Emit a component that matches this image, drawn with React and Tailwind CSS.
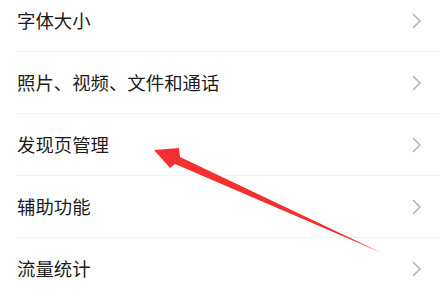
import React from "react";

const items = ["字体大小", "照片、视频、文件和通话", "发现页管理", "辅助功能", "流量统计"];

function Chevron() {
  return (
    <svg width="10" height="16" viewBox="0 0 10 16" className="shrink-0">
      <path d="M1.5 1.5 L8 8 L1.5 14.5" fill="none" stroke="#b5b5b5" strokeWidth="1.6" strokeLinecap="round" strokeLinejoin="round" />
    </svg>
  );
}

export default function App() {
  return (
    <div
      className="relative w-[440px] h-[298px] overflow-hidden bg-white"
      style={{ fontFamily: '"Noto Sans CJK SC", "Noto Sans", sans-serif' }}
    >
      <div className="-mt-[10px] flex flex-col">
        {items.map((t, i) => (
          <div key={i} className="h-[62px] pl-[16px] flex">
            <div className={"flex-1 flex items-center justify-between pr-[18px] " + (i < items.length - 1 ? "border-b border-[#f2f2f2]" : "")}>
              <span className="text-[18.4px] text-[#1c1c1c] pl-[1px]">{t}</span>
              <Chevron />
            </div>
          </div>
        ))}
      </div>
      <svg className="absolute left-0 top-0 pointer-events-none" width="440" height="298" viewBox="0 0 440 298">
        <polygon points="154,150 179,148 180,157 382,253 175,164 170,168" fill="#f23030" />
      </svg>
    </div>
  );
}
